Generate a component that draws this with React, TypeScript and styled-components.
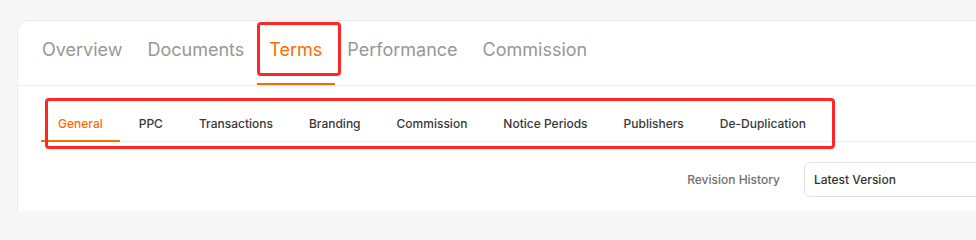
import React from "react";
import styled, { createGlobalStyle } from "styled-components";

const Global = createGlobalStyle`
  html, body {
    margin: 0;
    padding: 0;
    overflow: hidden;
    background: #f7f7f7;
    font-family: Inter, "Noto Sans", sans-serif;
  }
  * { box-sizing: border-box; }
`;

const Page = styled.div`
  padding: 20px 0 0 17px;
  width: 976px;
  overflow: hidden;
`;

const Card = styled.div`
  position: relative;
  width: 1000px;
  height: 191px;
  background: #fff;
  border: 1px solid #ebebeb;
  border-right: none;
  border-bottom: none;
  border-radius: 12px 0 0 0;
`;

const MainTabs = styled.nav`
  display: flex;
  padding-left: 11.5px;
  border-bottom: 1px solid #ececec;
`;

const MainTab = styled.div<{ $active?: boolean }>`
  padding: 18px 12.5px 22px;
  line-height: 22px;
  font-size: 18px;
  font-weight: 400;
  color: ${(p) => (p.$active ? "#ff6a00" : "#979797")};
  border-bottom: 2px solid ${(p) => (p.$active ? "#ff6a00" : "transparent")};
  white-space: nowrap;
`;

const SubTabs = styled.nav`
  display: flex;
  gap: 2px;
  margin-left: 23px;
  border-bottom: 1px solid #ececec;
`;

const SubTab = styled.div<{ $active?: boolean }>`
  padding: 30px 17px 8px;
  margin-bottom: -1px;
  line-height: 16px;
  font-size: 12px;
  font-weight: 500;
  color: ${(p) => (p.$active ? "#ff6a00" : "#383838")};
  border-bottom: 2px solid ${(p) => (p.$active ? "#ff6a00" : "transparent")};
  white-space: nowrap;
`;

const RevisionRow = styled.div`
  display: flex;
  justify-content: flex-end;
  align-items: center;
  gap: 24px;
  margin-top: 20px;
  padding-right: 24px;
`;

const RevisionLabel = styled.span`
  font-size: 12px;
  font-weight: 500;
  color: #6f6f6f;
`;

const Select = styled.div`
  width: 189px;
  height: 35px;
  display: flex;
  align-items: center;
  padding-left: 9px;
  border: 1px solid #e2e2e2;
  border-radius: 6px;
  font-size: 12px;
  font-weight: 500;
  color: #333;
`;

const Highlight = styled.div`
  position: absolute;
  border: 3px solid #ff2626;
  border-radius: 4px;
  pointer-events: none;
`;

const mainTabs = ["Overview", "Documents", "Terms", "Performance", "Commission"];
const subTabs = [
  "General",
  "PPC",
  "Transactions",
  "Branding",
  "Commission",
  "Notice Periods",
  "Publishers",
  "De-Duplication",
];

export default function App() {
  return (
    <>
      <Global />
      <Page>
        <Card>
          <MainTabs>
            {mainTabs.map((t) => (
              <MainTab key={t} $active={t === "Terms"}>
                {t}
              </MainTab>
            ))}
          </MainTabs>
          <SubTabs>
            {subTabs.map((t) => (
              <SubTab key={t} $active={t === "General"}>
                {t}
              </SubTab>
            ))}
          </SubTabs>
          <RevisionRow>
            <RevisionLabel>Revision History</RevisionLabel>
            <Select>Latest Version</Select>
          </RevisionRow>
          <Highlight style={{ left: 239, top: 1, width: 84, height: 54 }} />
          <Highlight style={{ left: 27, top: 77, width: 790, height: 51 }} />
        </Card>
      </Page>
    </>
  );
}
